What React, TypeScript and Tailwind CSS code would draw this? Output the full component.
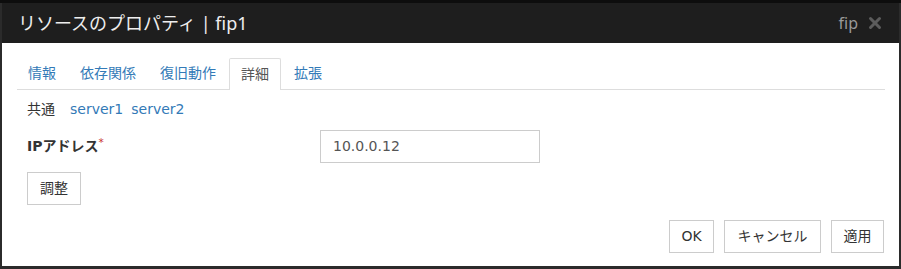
import { X } from 'lucide-react';

const tabs = ['情報', '依存関係', '復旧動作', '詳細', '拡張'];

export default function App() {
    return (
        <div
            className="w-[901px] h-[269px] flex flex-col bg-[#2b2b2b] border-t-[3px] border-[#0d0d0d] px-[2px] pb-[3px] text-[14px] text-[#333]"
            style={{ fontFamily: '"DejaVu Sans", "Noto Sans CJK JP", sans-serif' }}
        >
            {/* Header */}
            <div
                className="h-[40px] flex items-center justify-between bg-[#1e1e1e] pl-[16px] pr-[15px]"
                style={{ fontFamily: '"Noto Sans", "Noto Sans CJK JP", sans-serif' }}
            >
                <span className="text-[18px] text-[#eeeeee]">リソースのプロパティ | fip1</span>
                <div className="flex items-center gap-[8px]">
                    <span className="text-[16px] text-[#999]">fip</span>
                    <X className="size-[18px] text-[#5c5c5c]" strokeWidth={4} />
                </div>
            </div>

            {/* Body */}
            <div className="flex-1 flex flex-col bg-white pt-[15px] pl-[15px] pr-[14px]">
                <div className="flex border-b border-[#dddddd] h-[32px]">
                    {tabs.map((t) => (
                        <div
                            key={t}
                            className={`px-[11px] mr-[2px] flex items-center ${
                                t === '詳細'
                                    ? 'border border-b-0 border-[#dddddd] bg-white text-[#555] rounded-t-[2px] -mb-px'
                                    : 'text-[#337ab7]'
                            }`}
                        >
                            {t}
                        </div>
                    ))}
                </div>

                <div className="flex items-center mt-[8px] pl-[10px] h-[22px]">
                    <span>共通</span>
                    <span className="text-[#337ab7] ml-[15px]">server1</span>
                    <span className="text-[#337ab7] ml-[8px]">server2</span>
                </div>

                <div className="flex items-center mt-[10px] pl-[10px]">
                    <span className="w-[293px] font-bold">
                        IPアドレス<sup className="text-[#c9302c] font-normal">*</sup>
                    </span>
                    <div className="w-[220px] h-[33px] border border-[#cccccc] flex items-center px-[12px] text-[#555]">
                        10.0.0.12
                    </div>
                </div>

                <div className="mt-[9px] pl-[10px]">
                    <div className="w-[54px] h-[33px] border border-[#cccccc] flex items-center justify-center">
                        調整
                    </div>
                </div>

                <div className="flex justify-end gap-[10px] mt-[15px] pr-[1px]">
                    <div className="w-[45px] h-[33px] border border-[#cccccc] flex items-center justify-center">OK</div>
                    <div className="w-[97px] h-[33px] border border-[#cccccc] flex items-center justify-center">キャンセル</div>
                    <div className="w-[53px] h-[33px] border border-[#cccccc] flex items-center justify-center">適用</div>
                </div>
            </div>
        </div>
    );
}
